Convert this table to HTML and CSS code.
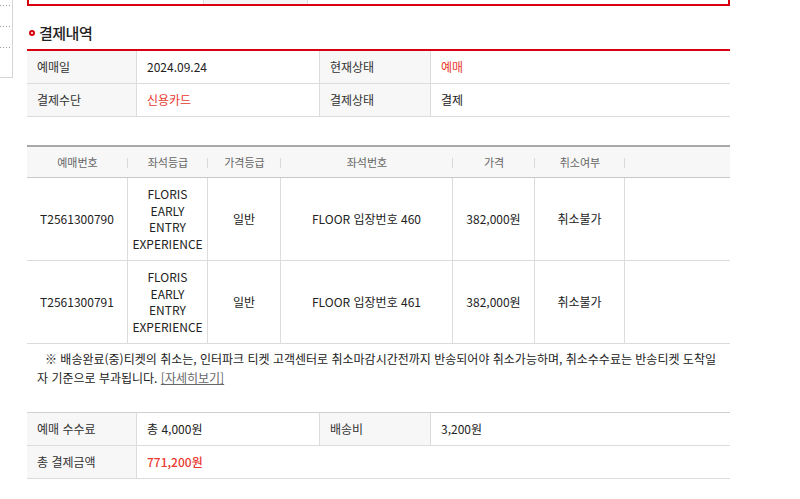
FILE: index.html
```html
<!DOCTYPE html>
<html lang="ko">
<head>
<meta charset="utf-8">
<title>결제내역</title>
<link rel="stylesheet" href="styles.css">
</head>
<body>
<div class="page">
  <aside class="side">
    <div class="side-item"></div>
    <div class="side-item"></div>
    <div class="side-item"></div>
  </aside>
  <main class="main">
    <div class="topbox">
      <div class="tb-cell"></div>
      <div class="tb-cell tb-gray"></div>
      <div class="tb-cell"></div>
    </div>

    <h2 class="title"><span class="dot"></span>결제내역</h2>

    <table class="info">
      <colgroup><col class="c-l"><col class="c-v1"><col class="c-l2"><col></colgroup>
      <tr>
        <th>예매일</th><td>2024.09.24</td>
        <th>현재상태</th><td class="red">예매</td>
      </tr>
      <tr>
        <th>결제수단</th><td class="red">신용카드</td>
        <th>결제상태</th><td>결제</td>
      </tr>
    </table>

    <table class="tickets">
      <colgroup>
        <col class="t1"><col class="t2"><col class="t3"><col class="t4"><col class="t5"><col class="t6"><col>
      </colgroup>
      <thead>
        <tr>
          <th>예매번호</th><th>좌석등급</th><th>가격등급</th><th>좌석번호</th><th>가격</th><th>취소여부</th><th class="last"></th>
        </tr>
      </thead>
      <tbody>
        <tr>
          <td>T2561300790</td>
          <td>FLORIS<br>EARLY<br>ENTRY<br>EXPERIENCE</td>
          <td>일반</td>
          <td>FLOOR 입장번호 460</td>
          <td>382,000원</td>
          <td>취소불가</td>
          <td class="last"></td>
        </tr>
        <tr>
          <td>T2561300791</td>
          <td>FLORIS<br>EARLY<br>ENTRY<br>EXPERIENCE</td>
          <td>일반</td>
          <td>FLOOR 입장번호 461</td>
          <td>382,000원</td>
          <td>취소불가</td>
          <td class="last"></td>
        </tr>
      </tbody>
    </table>

    <p class="note">※ 배송완료(중)티켓의 취소는, 인터파크 티켓 고객센터로 취소마감시간전까지 반송되어야 취소가능하며, 취소수수료는 반송티켓 도착일<br>자 기준으로 부과됩니다. <a href="#" class="more">[자세히보기]</a></p>

    <table class="info fee">
      <colgroup><col class="c-l"><col class="c-v1"><col class="c-l2"><col></colgroup>
      <tr>
        <th>예매 수수료</th><td>총 4,000원</td>
        <th>배송비</th><td>3,200원</td>
      </tr>
      <tr>
        <th>총 결제금액</th><td colspan="3" class="red total">771,200원</td>
      </tr>
    </table>
  </main>
</div>
</body>
</html>
```

FILE: styles.css
```css
html, body {
  margin: 0;
  padding: 0;
  background: #fff;
}
body {
  font-family: "Noto Sans CJK KR", "Noto Sans", sans-serif;
  font-size: 12px;
  color: #333;
}
.page {
  display: flex;
  align-items: flex-start;
}
.side {
  width: 13px;
  height: 78px;
  border-right: 1px solid #d6d6d6;
  border-bottom: 1px solid #d6d6d6;
  box-sizing: border-box;
  padding-top: 5px;
  display: flex;
  flex-direction: column;
  gap: 20px;
}
.side-item {
  width: 10px;
  height: 1px;
  background: repeating-linear-gradient(to right, #9a9a9a 0 1px, transparent 1px 3px);
}
.main {
  width: 703px;
  margin-left: 14px;
}
.topbox {
  height: 6px;
  box-sizing: border-box;
  border: 2px solid #d7000f;
  border-top: none;
  display: grid;
  grid-template-columns: 175px 104px 1fr;
}
.tb-cell {
  border-right: 1px solid #ddd;
}
.tb-cell:last-child { border-right: none; }
.tb-gray { background: #f5f5f5; }

.title {
  margin: 0;
  padding-top: 10px;
  height: 43px;
  box-sizing: border-box;
  line-height: 33px;
  font-size: 15px;
  font-weight: 500;
  color: #222;
  display: flex;
  align-items: center;
  letter-spacing: -0.5px;
}
.dot {
  width: 2px;
  height: 2px;
  border: 2px solid #d7000f;
  border-radius: 50%;
  margin: 1px 4px 0 2px;
  flex: none;
}

table {
  border-collapse: separate;
  border-spacing: 0;
  table-layout: fixed;
  width: 703px;
}
.info {
  border-top: 2px solid #d7000f;
}
.c-l { width: 110px; }
.c-v1 { width: 183px; }
.c-l2 { width: 111px; }
.info th, .info td {
  height: 33px;
  box-sizing: border-box;
  padding: 0 0 0 10px;
  border-bottom: 1px solid #dcdcdc;
  text-align: left;
  font-weight: normal;
  vertical-align: middle;
  line-height: 16px;
}
.info th {
  background: #f7f7f7;
  border-right: 1px solid #dcdcdc;
  color: #333;
}
.info tr td:nth-child(2) {
  border-right: 1px solid #dcdcdc;
}
.info td { color: #222; }
.info td.red, .red { color: #e8392f; }
.info tr td.total { border-right: none; font-weight: 500; }
.fee {
  border-top: 1px solid #d0d0d0;
}

.tickets {
  margin-top: 28px;
  border-top: 2px solid #a8a8a8;
}
.t1 { width: 101px; }
.t2 { width: 80px; }
.t3 { width: 73px; }
.t4 { width: 172px; }
.t5 { width: 82px; }
.t6 { width: 90px; }
.tickets th {
  height: 31px;
  box-sizing: border-box;
  background: #f7f7f7;
  border-bottom: 1px solid #c8c8c8;
  font-weight: normal;
  color: #666;
  font-size: 11px;
  padding: 0;
  position: relative;
}
.tickets th:not(.last)::after {
  content: "";
  position: absolute;
  right: 0;
  top: 11px;
  width: 1px;
  height: 10px;
  background: #dadada;
}
.tickets td {
  height: 83px;
  box-sizing: border-box;
  padding: 0;
  text-align: center;
  vertical-align: middle;
  line-height: 16.5px;
  border-bottom: 1px solid #dcdcdc;
  border-right: 1px solid #dcdcdc;
  color: #222;
}
.tickets td.last { border-right: none; }

.note {
  margin: 0;
  padding: 5px 0 0 10px;
  line-height: 19px;
  text-indent: 8px;
  color: #222;
  height: 68px;
  box-sizing: border-box;
}
.more {
  color: #666;
  text-decoration: underline;
}
```
